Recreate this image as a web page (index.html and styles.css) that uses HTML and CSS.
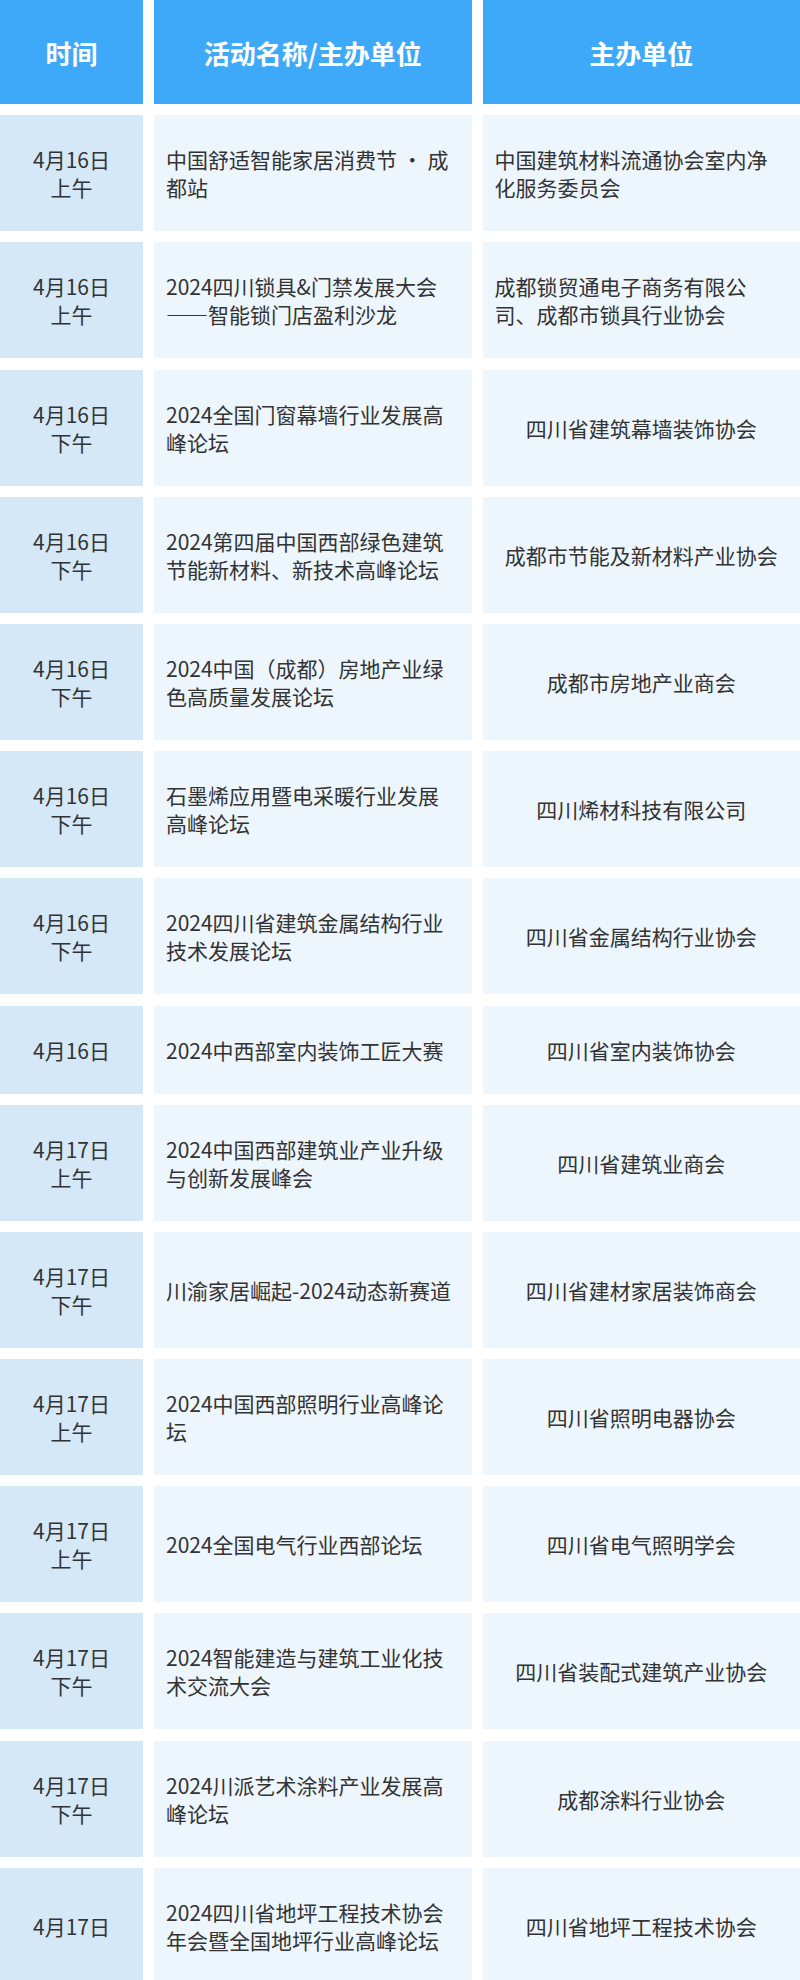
FILE: index.html
```html
<!DOCTYPE html>
<html lang="zh-CN">
<head>
<meta charset="utf-8">
<title>活动日程</title>
<link rel="stylesheet" href="styles.css">
</head>
<body>
<div class="table">
  <div class="th">时间</div>
  <div class="th">活动名称/主办单位</div>
  <div class="th">主办单位</div>

  <div class="time">4月16日<br>上午</div>
  <div class="name">中国舒适智能家居消费节 · 成都站</div>
  <div class="org"><span>中国建筑材料流通协会室内净化服务委员会</span></div>

  <div class="time">4月16日<br>上午</div>
  <div class="name">2024四川锁具&amp;门禁发展大会<br>——智能锁门店盈利沙龙</div>
  <div class="org"><span>成都锁贸通电子商务有限公司、成都市锁具行业协会</span></div>

  <div class="time">4月16日<br>下午</div>
  <div class="name">2024全国门窗幕墙行业发展高峰论坛</div>
  <div class="org"><span>四川省建筑幕墙装饰协会</span></div>

  <div class="time">4月16日<br>下午</div>
  <div class="name">2024第四届中国西部绿色建筑节能新材料、新技术高峰论坛</div>
  <div class="org"><span>成都市节能及新材料产业协会</span></div>

  <div class="time">4月16日<br>下午</div>
  <div class="name">2024中国（成都）房地产业绿色高质量发展论坛</div>
  <div class="org"><span>成都市房地产业商会</span></div>

  <div class="time">4月16日<br>下午</div>
  <div class="name">石墨烯应用暨电采暖行业发展高峰论坛</div>
  <div class="org"><span>四川烯材科技有限公司</span></div>

  <div class="time">4月16日<br>下午</div>
  <div class="name">2024四川省建筑金属结构行业技术发展论坛</div>
  <div class="org"><span>四川省金属结构行业协会</span></div>

  <div class="time">4月16日</div>
  <div class="name">2024中西部室内装饰工匠大赛</div>
  <div class="org"><span>四川省室内装饰协会</span></div>

  <div class="time">4月17日<br>上午</div>
  <div class="name">2024中国西部建筑业产业升级与创新发展峰会</div>
  <div class="org"><span>四川省建筑业商会</span></div>

  <div class="time">4月17日<br>下午</div>
  <div class="name">川渝家居崛起-2024动态新赛道</div>
  <div class="org"><span>四川省建材家居装饰商会</span></div>

  <div class="time">4月17日<br>上午</div>
  <div class="name">2024中国西部照明行业高峰论坛</div>
  <div class="org"><span>四川省照明电器协会</span></div>

  <div class="time">4月17日<br>上午</div>
  <div class="name">2024全国电气行业西部论坛</div>
  <div class="org"><span>四川省电气照明学会</span></div>

  <div class="time">4月17日<br>下午</div>
  <div class="name">2024智能建造与建筑工业化技术交流大会</div>
  <div class="org"><span>四川省装配式建筑产业协会</span></div>

  <div class="time">4月17日<br>下午</div>
  <div class="name">2024川派艺术涂料产业发展高峰论坛</div>
  <div class="org"><span>成都涂料行业协会</span></div>

  <div class="time">4月17日</div>
  <div class="name">2024四川省地坪工程技术协会年会暨全国地坪行业高峰论坛</div>
  <div class="org"><span>四川省地坪工程技术协会</span></div>
</div>
</body>
</html>
```

FILE: styles.css
```css
html, body {
  margin: 0;
  padding: 0;
  background: #ffffff;
}

body {
  font-family: "Noto Sans CJK SC", "Noto Sans", sans-serif;
  color: #333333;
}

.table {
  display: grid;
  grid-template-columns: 143px 1fr 1fr;
  column-gap: 11px;
  row-gap: 11.2px;
  width: 800px;
}

.th {
  height: 104px;
  background: #3ea9f9;
  color: #ffffff;
  font-size: 26px;
  font-weight: 700;
  display: flex;
  align-items: center;
  justify-content: center;
}

.time,
.name,
.org {
  font-size: 21px;
  line-height: 28px;
  padding: 30px 12px;
  display: flex;
  align-items: center;
}

.time {
  background: #d5e8f8;
  justify-content: center;
  text-align: center;
}

.name {
  background: #edf5fd;
}

.org {
  background: #edf5fd;
  justify-content: center;
}
```
